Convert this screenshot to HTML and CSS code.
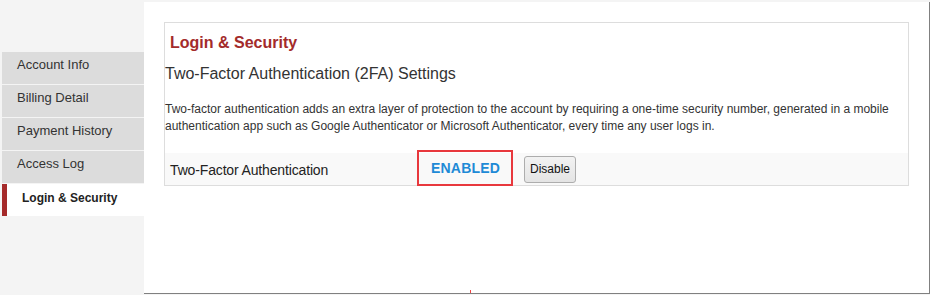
FILE: index.html
```html
<!DOCTYPE html>
<html lang="en">
<head>
    <meta charset="UTF-8">
    <title>Login &amp; Security</title>
    <link rel="stylesheet" href="styles.css">
</head>
<body>
    <div class="layout">
        <!-- Side menu -->
        <ul class="side-menu">
            <li class="menu-item">Account Info</li>
            <li class="menu-item">Billing Detail</li>
            <li class="menu-item">Payment History</li>
            <li class="menu-item">Access Log</li>
            <li class="menu-item active">Login &amp; Security</li>
        </ul>

        <!-- Main panel -->
        <div class="main-panel">
            <div class="card">
                <h2 class="card-title">Login &amp; Security</h2>
                <h3 class="card-subtitle">Two-Factor Authentication (2FA) Settings</h3>
                <p class="card-text">Two-factor authentication adds an extra layer of protection to the account by requiring a one-time security number, generated in a mobile authentication app such as Google Authenticator or Microsoft Authenticator, every time any user logs in.</p>

                <div class="setting-row">
                    <div class="setting-label">Two-Factor Authentication</div>
                    <div class="status-box">ENABLED</div>
                    <button class="btn-disable">Disable</button>
                </div>
            </div>
            <span class="cursor-mark"></span>
        </div>
    </div>
</body>
</html>
```

FILE: styles.css
```css
/* === Base === */
body {
    margin: 0;
    padding: 2px 0 0 2px;
    background: #f4f4f4;
    font-family: "Liberation Sans", Arial, sans-serif;
    color: #333;
}

.layout {
    display: flex;
    align-items: flex-start;
}

/* === Side menu === */
.side-menu {
    list-style: none;
    margin: 50px 0 0 0;
    padding: 0;
    width: 142px;
    flex-shrink: 0;
}

.menu-item {
    box-sizing: border-box;
    height: 32px;
    margin-bottom: 1px;
    padding: 5px 15px;
    background: #dcdcdc;
    font-size: 13px;
    line-height: 15px;
    color: #333;
}

.menu-item.active {
    padding-top: 7px;
    background: #fff;
    border-left: 5px solid #a52a2a;
    font-size: 12px;
    font-weight: bold;
    color: #222;
}

/* === Main panel === */
.main-panel {
    position: relative;
    box-sizing: border-box;
    width: 786px;
    height: 292px;
    padding: 20px;
    background: #fff;
    border-right: 1px solid #808080;
    border-bottom: 1px solid #808080;
}

.cursor-mark {
    position: absolute;
    left: 326px;
    bottom: 0;
    width: 1px;
    height: 3px;
    background: #f04545;
}

.card {
    border: 1px solid #ddd;
}

.card-title {
    margin: 11px 0 0 0;
    padding-left: 5px;
    font-size: 16px;
    line-height: 18px;
    color: #a32b2b;
}

.card-subtitle {
    margin: 13px 0 0 0;
    font-size: 16px;
    font-weight: normal;
    line-height: 18px;
    color: #333;
}

.card-text {
    margin: 18px 0 0 0;
    font-size: 12px;
    line-height: 17px;
    color: #333;
}

/* === Setting row === */
.setting-row {
    display: flex;
    align-items: center;
    height: 32px;
    margin-top: 18px;
    padding-left: 5px;
    background: #f9f9f9;
}

.setting-label {
    width: 247px;
    padding-top: 2px;
    font-size: 14px;
    letter-spacing: -0.15px;
    color: #222;
}

.status-box {
    box-sizing: border-box;
    width: 96px;
    height: 36px;
    margin: -3px 0 -1px 0;
    padding-left: 12px;
    border: 2px solid #e8383d;
    font-size: 14px;
    font-weight: bold;
    letter-spacing: 0.2px;
    line-height: 32px;
    color: #1e8ad6;
}

.btn-disable {
    box-sizing: border-box;
    width: 52px;
    height: 27px;
    margin-left: 11px;
    padding: 0;
    border: 1px solid #adadad;
    border-radius: 3px;
    background: linear-gradient(#f2f2f2, #e4e4e4);
    font-family: "Liberation Sans", Arial, sans-serif;
    font-size: 12px;
    color: #111;
}
```
